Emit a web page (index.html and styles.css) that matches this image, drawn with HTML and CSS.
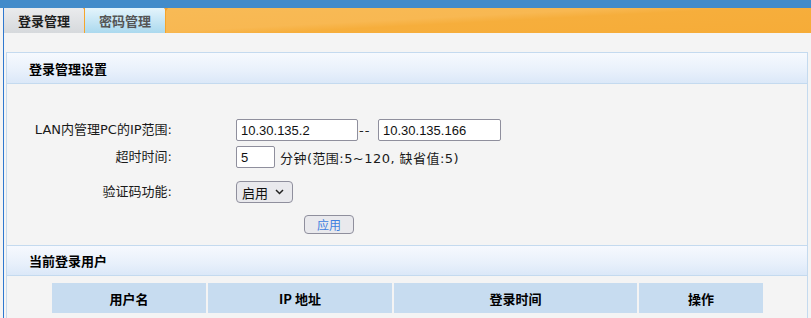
FILE: index.html
```html
<!DOCTYPE html>
<html lang="zh-CN">
<head>
<meta charset="utf-8">
<title>登录管理</title>
<link rel="stylesheet" href="styles.css">
</head>
<body>
<div class="topbar"></div>
<div class="frame">
  <nav class="tabs">
    <a class="tab tab-active">登录管理</a>
    <a class="tab tab-other">密码管理</a>
  </nav>
  <div class="page">
    <section class="panel">
      <h2 class="panel-title">登录管理设置</h2>
      <div class="form">
        <div class="row row-ip">
          <label class="label">LAN内管理PC的IP范围:</label>
          <div class="field">
            <input class="input ip-start" type="text" value="10.30.135.2">
            <span class="dash">--</span>
            <input class="input ip-end" type="text" value="10.30.135.166">
          </div>
        </div>
        <div class="row row-timeout">
          <label class="label">超时时间:</label>
          <div class="field">
            <input class="input timeout" type="text" value="5">
            <span class="hint">分钟(范围:5~120, 缺省值:5)</span>
          </div>
        </div>
        <div class="row row-captcha">
          <label class="label">验证码功能:</label>
          <div class="field">
            <span class="select-wrap">
              <select class="select"><option>启用</option><option>禁用</option></select>
              <svg class="chev" width="9" height="6" viewBox="0 0 9 6"><path d="M1 1 L4.5 4.5 L8 1" fill="none" stroke="#222" stroke-width="1.5"/></svg>
            </span>
          </div>
        </div>
        <div class="row row-btn">
          <span class="label"></span>
          <div class="field"><button class="btn" type="button">应用</button></div>
        </div>
      </div>
      <h2 class="panel-title panel-title-second">当前登录用户</h2>
      <div class="table">
        <div class="th">用户名</div>
        <div class="th">IP 地址</div>
        <div class="th">登录时间</div>
        <div class="th">操作</div>
      </div>
    </section>
  </div>
</div>
</body>
</html>
```

FILE: styles.css
```css
* { box-sizing: border-box; }
html, body { margin: 0; padding: 0; }
body {
  background: #f4f4f4;
  font-family: "DejaVu Sans", "Noto Sans CJK SC", sans-serif;
  font-size: 13px;
  color: #222;
  overflow: hidden;
}
.topbar {
  height: 8px;
  background: #428bca;
}
.frame {
  margin-left: 3px;
  border-left: 1px solid #2f78cf;
  min-height: calc(100vh - 8px);
}
.tabs {
  display: flex;
  height: 25px;
  background: linear-gradient(177deg, #f8bb57 0%, #f8b852 48%, #f6ae3c 58%, #f6ac38 100%);
}
.tab {
  position: relative;
  width: 81px;
  height: 25px;
  border-right: 1px solid #f5a52c;
  display: flex;
  align-items: center;
  justify-content: center;
  font-family: "Noto Sans CJK SC", sans-serif;
  font-weight: bold;
  font-size: 13px;
  cursor: pointer;
}
.tab::after {
  content: "";
  position: absolute;
  top: 0;
  right: -3px;
  border-left: 2.5px solid transparent;
  border-right: 2.5px solid transparent;
  border-top: 3px solid #f0a030;
}
.tab-active {
  color: #1e1e1e;
  background: linear-gradient(#eaebed, #d6d9dc);
}
.tab-other {
  color: #555;
  background: linear-gradient(#e4f4fc, #abd9ee);
}
.page {
  padding: 19px 3px 0 2px;
}
.panel {
  border: 1px solid #c4daef;
  border-bottom: none;
  min-height: 300px;
}
.panel-title {
  margin: 0;
  height: 31px;
  padding-left: 22px;
  display: flex;
  align-items: center;
  font-family: "Noto Sans CJK SC", sans-serif;
  font-size: 13px;
  font-weight: bold;
  color: #000;
  background: linear-gradient(#f6f9fe, #e8f0fb 60%, #dbe8f8);
  border-bottom: 1px solid #c4daef;
}
.panel-title-second {
  border-top: 1px solid #c4daef;
}
.form {
  padding: 35px 0 11px;
}
.row {
  display: grid;
  grid-template-columns: 165px 1fr;
  column-gap: 64px;
  align-items: center;
  min-height: 22px;
}
.row-timeout { margin-top: 5px; }
.row-captcha { margin-top: 13px; }
.row-btn { margin-top: 12px; min-height: 19px; }
.label {
  text-align: right;
  font-size: 13px;
  color: #1a1a1a;
  line-height: 16px;
}
.field {
  display: flex;
  align-items: center;
}
.input {
  height: 22px;
  border: 1px solid #8f8f9d;
  border-radius: 2px;
  background: #fff;
  padding: 0 4px;
  font-family: "Liberation Sans", "Noto Sans CJK SC", sans-serif;
  font-size: 13px;
  color: #111;
  outline: none;
}
.ip-start { width: 122px; }
.ip-end { width: 123px; }
.timeout { width: 39px; }
.dash {
  width: 20px;
  padding-left: 1px;
  letter-spacing: 1px;
}
.hint {
  margin-left: 5px;
  color: #1a1a1a;
  letter-spacing: 0.45px;
}
.select-wrap {
  position: relative;
  display: inline-block;
}
.select {
  -webkit-appearance: none;
  appearance: none;
  width: 57px;
  height: 22px;
  border: 1px solid #8f8f9d;
  border-radius: 4px;
  background: #e9e9ed;
  padding: 0 0 0 5px;
  font-family: "Noto Sans CJK SC", sans-serif;
  font-size: 13px;
  color: #111;
  outline: none;
}
.chev {
  position: absolute;
  right: 9px;
  top: 8px;
  pointer-events: none;
}
.btn {
  margin-left: 68px;
  width: 50px;
  height: 19px;
  border: 1px solid #8f8f9d;
  border-radius: 4px;
  background: #e9e9ed;
  color: #3f7fe0;
  font-family: "Noto Sans CJK SC", sans-serif;
  font-size: 12px;
  padding: 0;
  line-height: 17px;
}
.table {
  display: grid;
  grid-template-columns: 154px 184px 243px 124px;
  column-gap: 2px;
  margin: 7px 0 0 45px;
}
.th {
  height: 30px;
  background: #c7dcf0;
  display: flex;
  align-items: center;
  justify-content: center;
  font-family: "Noto Sans CJK SC", sans-serif;
  font-weight: bold;
  font-size: 13px;
  color: #000;
}
```
